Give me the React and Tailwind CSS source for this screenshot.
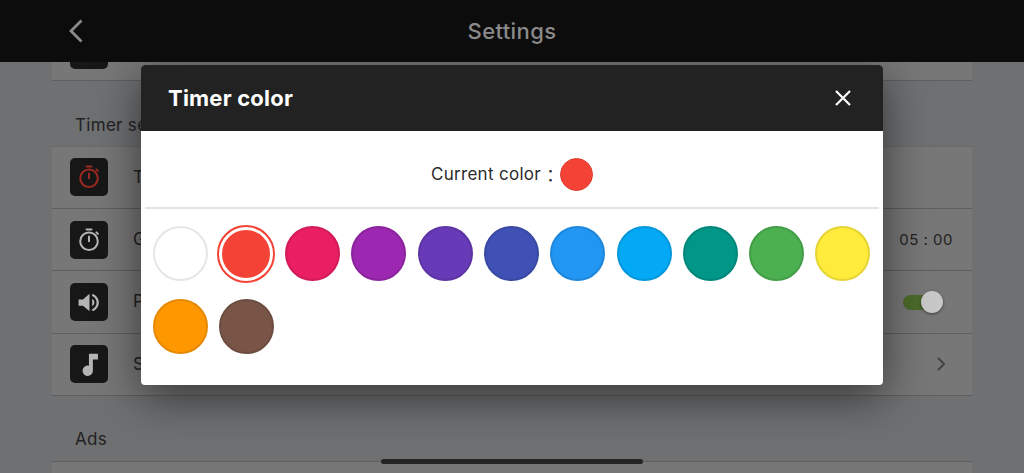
import { useState } from "react";

const font = "font-['Inter','Liberation_Sans',sans-serif]";

function Stopwatch({ color }) {
    return (
        <svg viewBox="0 0 24 24" className="w-[24px] h-[24px]" fill="none" stroke={color} strokeWidth="2" strokeLinecap="round">
            <path d="M9.500 1.600h5" strokeWidth="2" />
            <circle cx="12" cy="13.200" r="8.800" />
            <path d="M12 8.400v4.800" />
            <path d="M19.400 4.400l1.500 1.500" strokeWidth="2" />
        </svg>
    );
}

function Speaker() {
    return (
        <svg viewBox="0 0 24 24" className="w-[25px] h-[25px]" fill="#b5b5b5">
            <path d="M1.500 9h4.200L12 3.600v16.800L5.700 15H1.500z" />
            <path d="M15 3.500c3.500 1.400 6 4.700 6 8.500s-2.500 7.100-6 8.500l-.7-1.900c2.600-1.100 4.500-3.700 4.500-6.600s-1.900-5.500-4.500-6.600z" />
            <path d="M14.500 8.500c1.300.7 2.200 2 2.200 3.500s-.9 2.800-2.200 3.500z" />
        </svg>
    );
}

function Note() {
    return (
        <svg viewBox="0 0 24 24" className="w-[27px] h-[27px]" fill="#b5b5b5">
            <path d="M11.500 2.500H19.500V7.500H15V17.500A4.600 4.600 0 1 1 11.500 13.100z" />
        </svg>
    );
}

function Chevron() {
    return (
        <svg viewBox="0 0 10 18" className="w-[8px] h-[14px] text-[#444444] mr-[1px]" fill="none" stroke="currentColor" strokeWidth="2.600">
            <path d="M1 1l8 8-8 8" />
        </svg>
    );
}

function Row({ icon, label, right }) {
    return (
        <div className="h-[62.300px] flex items-center pl-[18px] pr-[26px] border-b border-[#5e5e5e] bg-[#777777]">
            <div className="w-[38px] h-[38px] rounded-[5px] bg-[#171717] flex items-center justify-center shrink-0">{icon}</div>
            {label && <span className="ml-[25px] text-[17px] text-[#222222] whitespace-nowrap">{label}</span>}
            <div className="ml-auto">{right}</div>
        </div>
    );
}

const colors = [
    ["#ffffff", "#e6e6e6"],
    ["#f44336", "#f44336"],
    ["#e91e63", "#d21b59"],
    ["#9c27b0", "#8c239e"],
    ["#673ab7", "#5d34a5"],
    ["#3f51b5", "#3949a3"],
    ["#2196f3", "#1e87db"],
    ["#03a9f4", "#0398dc"],
    ["#009688", "#00877a"],
    ["#4caf50", "#449e48"],
    ["#ffeb3b", "#e6d435"],
    ["#ff9800", "#e68900"],
    ["#795548", "#6d4d41"],
];

export default function App() {
    const [current] = useState(1);

    return (
        <div className={`w-[1024px] h-[473px] overflow-hidden relative bg-[#6f7072] ${font}`}>
            <header className="relative z-10 h-[62px] bg-[#0c0c0c] flex items-center justify-center">
                <svg viewBox="0 0 14 24" className="absolute left-[69px] top-[19px] w-[14px] h-[24px]" fill="none" stroke="#8a8a8a" strokeWidth="2.800">
                    <path d="M12.500 1.500L2 12l10.500 10.500" />
                </svg>
                <h1 className="text-[22px] font-medium tracking-[0.4px] text-[#8a8a8a]">Settings</h1>
            </header>

            <main className="w-[920px] mx-auto h-[411px] overflow-hidden">
                <div className="-mt-[43px]">
                    <Row icon={<Note />} />
                    <div className="h-[65.500px] flex items-end pb-[8.500px] pl-[23px] text-[17px] text-[#222222] tracking-[0.3px]">Timer settings</div>
                    <div className="border-t border-[#6a6a6a] -mt-px">
                        <Row icon={<Stopwatch color="#9c2a22" />} label="Timer color" />
                        <Row
                            icon={<Stopwatch color="#b5b5b5" />}
                            label="Game time"
                            right={<span className="text-[15px] tracking-[0.5px] text-[#222222] mr-[-7px] whitespace-nowrap">05 : 00</span>}
                        />
                        <Row
                            icon={<Speaker />}
                            label="Play sound"
                            right={
                                <div className="relative w-[40px] h-[22px] flex items-center mr-[3px]">
                                    <div className="w-[26px] h-[15px] rounded-full bg-[#4a6a2a]" />
                                    <div className="absolute right-0 top-0 w-[22px] h-[22px] rounded-full bg-[#c8c8c8] shadow-[0_1px_3px_rgba(0,0,0,0.5)]" />
                                </div>
                            }
                        />
                        <Row icon={<Note />} label="Sound" right={<Chevron />} />
                    </div>
                    <div className="h-[65px] flex items-end pb-[8px] pl-[23px] text-[17px] text-[#222222] tracking-[0.3px]">Ads</div>
                    <div className="h-[40px] border-t border-[#5e5e5e] bg-[#777777]" />
                </div>
            </main>

            <section className="absolute left-[141px] top-[65px] w-[742px] h-[320px] rounded-[4px] overflow-hidden bg-white shadow-[0_12px_45px_rgba(0,0,0,0.55)]">
                <div className="h-[66px] bg-[#222222] flex items-center justify-between pl-[27px] pr-[32px]">
                    <h2 className="text-[22px] font-bold text-white tracking-[0.2px]">Timer color</h2>
                    <svg viewBox="0 0 16 16" className="w-[16px] h-[16px]" fill="none" stroke="white" strokeWidth="2.200">
                        <path d="M1 1l14 14M15 1L1 15" />
                    </svg>
                </div>
                <div className="mx-[4px] h-[78px] pt-[11px] border-b-2 border-[#e3e3e3] flex items-center justify-center">
                    <span className="text-[17px] text-[#2b2b2b] tracking-[0.3px] mt-[1px]">Current color</span>
                    <span className="w-[19px] text-center text-[17px] leading-none text-[#2b2b2b] font-['Noto_Sans_CJK_JP',sans-serif]">：</span>
                    <span className="w-[33px] h-[33px] rounded-full bg-[#f44336] border border-[#dc3c30]" />
                </div>
                <div className="ml-[6px] mt-[17px] w-[729px] grid grid-cols-11 auto-rows-[73px]">
                    {colors.map(([fill, edge], i) => (
                        <div key={fill} className="flex items-start justify-center">
                            <div
                                className={i === current ? "w-[58px] h-[58px] -mt-[1.500px] rounded-full border-2 border-[#f44336] p-[3px]" : "w-[55px] h-[55px] rounded-full"}
                            >
                                <div className="w-full h-full rounded-full border-2" style={{ backgroundColor: fill, borderColor: edge }} />
                            </div>
                        </div>
                    ))}
                </div>
            </section>

            <div className="absolute left-[381px] top-[459px] w-[262px] h-[5px] rounded-full bg-[#242424]" />
        </div>
    );
}
